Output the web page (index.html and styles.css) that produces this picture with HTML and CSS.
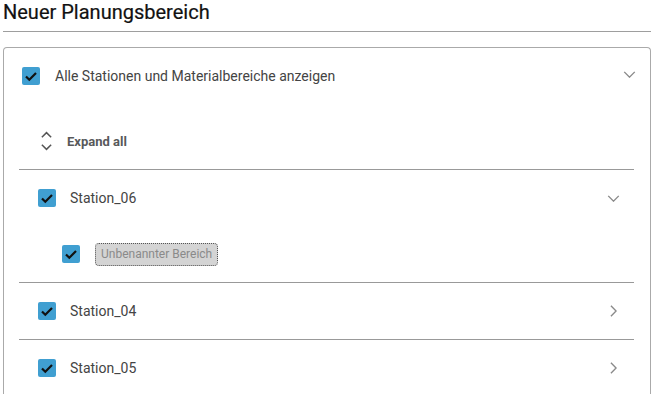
FILE: index.html
```html
<!DOCTYPE html>
<html lang="de">
<head>
<meta charset="UTF-8" />
<title>Neuer Planungsbereich</title>
<link rel="stylesheet" href="styles.css">
</head>
<body>
<h1 class="title">Neuer Planungsbereich</h1>
<div class="divider"></div>

<div class="panel">
  <div class="panel-head">
    <span class="check"><svg viewBox="0 0 18 18"><path d="M4 9.5l3.3 3.3L14 6"/></svg></span>
    <span class="head-label">Alle Stationen und Materialbereiche anzeigen</span>
    <svg class="chev chev-down head-chev" viewBox="0 0 14 8"><path d="M1 1l6 6 6-6"/></svg>
  </div>

  <div class="expand-row">
    <svg class="expand-icon" viewBox="0 0 14 20"><path d="M2 6l5-5 5 5M2 14l5 5 5-5"/></svg>
    <span>Expand all</span>
  </div>

  <div class="stations">
    <div class="station">
      <div class="station-row">
        <span class="check"><svg viewBox="0 0 18 18"><path d="M4 9.5l3.3 3.3L14 6"/></svg></span>
        <span class="station-name">Station_06</span>
        <svg class="chev chev-down" viewBox="0 0 14 8"><path d="M1 1l6 6 6-6"/></svg>
      </div>
      <div class="area-row">
        <span class="check"><svg viewBox="0 0 18 18"><path d="M4 9.5l3.3 3.3L14 6"/></svg></span>
        <span class="chip">Unbenannter Bereich</span>
      </div>
    </div>
    <div class="station">
      <div class="station-row">
        <span class="check"><svg viewBox="0 0 18 18"><path d="M4 9.5l3.3 3.3L14 6"/></svg></span>
        <span class="station-name">Station_04</span>
        <svg class="chev chev-right" viewBox="0 0 8 14"><path d="M1 1l6 6-6 6"/></svg>
      </div>
    </div>
    <div class="station">
      <div class="station-row">
        <span class="check"><svg viewBox="0 0 18 18"><path d="M4 9.5l3.3 3.3L14 6"/></svg></span>
        <span class="station-name">Station_05</span>
        <svg class="chev chev-right" viewBox="0 0 8 14"><path d="M1 1l6 6-6 6"/></svg>
      </div>
    </div>
  </div>
</div>
</body>
</html>
```

FILE: styles.css
```css
body {
  margin: 0;
  padding: 0 3px;
  background: #fff;
  color: #333;
  font-family: Roboto, "Liberation Sans", sans-serif;
  overflow: hidden;
}
.title {
  margin: 0;
  font-size: 20px;
  font-weight: 400;
  line-height: 24px;
  color: #111;
  height: 31px;
  -webkit-text-stroke: 0.2px #111;
}
.divider {
  height: 1px;
  background: #9e9e9e;
}
.panel {
  margin-top: 15px;
  border: 1px solid #aaa;
  border-bottom: none;
  border-radius: 4px 4px 0 0;
  height: 346px;
}
.check {
  width: 18px;
  height: 18px;
  flex: none;
  background: #409fd1;
  border-radius: 2px;
  display: flex;
}
.check svg {
  width: 18px;
  height: 18px;
  fill: none;
  stroke: #111;
  stroke-width: 2.2;
}
.chev {
  fill: none;
  stroke: #8a8a8a;
  stroke-width: 1.6;
  margin-left: auto;
  flex: none;
}
.chev-down {
  width: 13px;
  height: 7px;
}
.chev-right {
  width: 7px;
  height: 12px;
  margin-right: 3px;
}
.panel-head {
  display: flex;
  align-items: center;
  height: 55px;
  padding: 0 14px 0 18px;
}
.head-label {
  margin-left: 15px;
  font-size: 14px;
  color: #444;
}
.head-chev {
  margin-top: -2px;
}
.expand-row {
  display: flex;
  align-items: center;
  height: 56px;
  padding: 10px 0 0 36px;
  font-size: 13px;
  font-weight: 700;
  color: #58595b;
}
.expand-icon {
  width: 13px;
  height: 20px;
  fill: none;
  stroke: #555;
  stroke-width: 1.6;
  margin-right: 14px;
}
.stations {
  margin: 0 16px 0 15px;
}
.station {
  border-top: 1px solid #999;
}
.station-row {
  display: flex;
  align-items: center;
  height: 56px;
  padding: 0 14px 0 19px;
}
.station-name {
  margin-left: 14px;
  font-size: 14px;
  color: #444;
}
.area-row {
  display: flex;
  align-items: center;
  height: 56px;
  padding-left: 43px;
}
.chip {
  margin-left: 15px;
  padding: 0 5px;
  height: 21px;
  line-height: 21px;
  font-size: 12px;
  color: #8a8a8a;
  background: #d4d4d4;
  border: 1.5px dotted #555;
  border-radius: 4px;
}
```
